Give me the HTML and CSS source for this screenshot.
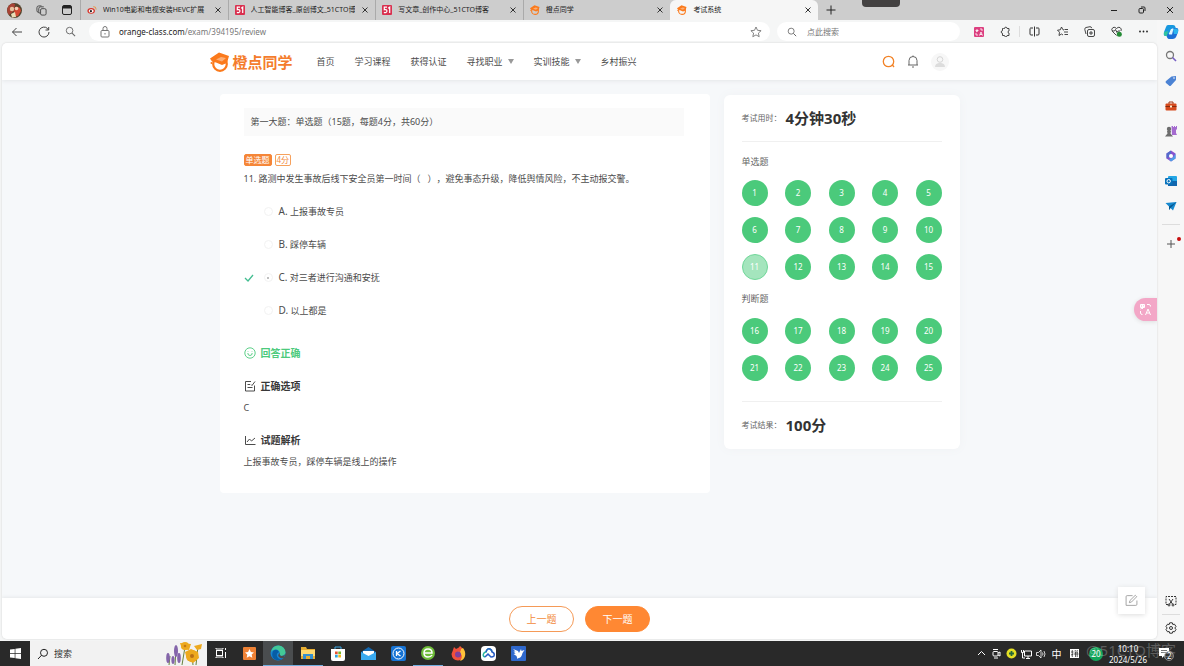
FILE: index.html
```html
<!DOCTYPE html>
<html lang="zh-CN">
<head>
<meta charset="utf-8">
<meta name="viewport" content="width=device-width, initial-scale=1">
<title>考试系统</title>
<link rel="stylesheet" href="styles.css">
</head>
<body>
<svg class="defs" aria-hidden="true">
  <symbol id="orange" viewBox="0 0 20 20">
    <circle cx="10" cy="12" r="6.800" fill="none" stroke="#fb7a1c" stroke-width="2.200"/>
    <path d="M0 6.500 9 .5l10 3.500-2 7-5 2-6-2.500-4-1z" fill="#fb7a1c"/>
    <path d="m6 7.500 5-2.500 5 1-4 3.500z" fill="#fff" opacity=".4"/>
    <circle cx="1.500" cy="11" r="1" fill="#fb7a1c"/>
  </symbol>
  <symbol id="fifty" viewBox="0 0 10 10">
    <rect width="10" height="10" rx="1" fill="#d9304f"/>
    <path d="M5 2.200H2.300V4.700C4 4.200 5 5 4.900 6.200S3.300 8 1.900 7.400M6.200 3.200 7.700 2.200V8" fill="none" stroke="#fff" stroke-width="1.200"/>
  </symbol>
  <symbol id="close" viewBox="0 0 8 8"><path d="m1.500 1.500 5 5m0-5-5 5" fill="none" stroke="#333" stroke-width="1"/></symbol>
  <symbol id="lens" viewBox="0 0 12 12"><circle cx="5" cy="5" r="3.600" fill="none" stroke="currentColor"/><path d="m7.700 7.700 3.300 3.300" stroke="currentColor" stroke-width="1.200"/></symbol>
  <symbol id="edit" viewBox="0 0 12 12"><path d="M7 1.500H2a1 1 0 0 0-1 1v8h9a1 1 0 0 0 1-1V6M4 8l.6-2L9.500 1.200l1.300 1.300L6 7.400z" fill="none" stroke="currentColor" stroke-width=".8"/></symbol>
</svg>

<header class="tabbar">
  <button class="tool avatar" aria-label="用户"><svg width="15" height="15" viewBox="0 0 15 15"><circle cx="7.500" cy="7.500" r="7.500" fill="#54452d"/><path d="M1 4q3-5 7-3L7 8 2 12Q-1 8 1 4" fill="#a94335"/><circle cx="5" cy="6" r="2.200" fill="#e6c29e"/><path d="M8 4q5-1 6 4l-3 5-5 1z" fill="#d44a34"/><circle cx="9.500" cy="5.500" r="1.800" fill="#f4cfb3"/><path d="m4 11 4-2 1 5-4 .5z" fill="#e9dfb8"/></svg></button>
  <button class="tool" aria-label="工作区"><svg width="11" height="11" viewBox="0 0 12 12" fill="none" stroke="#444"><rect x="5" y="4" width="6" height="7" rx="1.500"/><path d="M5 9H4.500a1.500 1.500 0 0 1-1.500-1.500V4a2 2 0 0 1 2-2h3.500M3 8.500Q1 8 1 6V3a2 2 0 0 1 2-2h3"/></svg></button>
  <button class="tool" aria-label="标签操作"><svg width="10" height="10" viewBox="0 0 10 10"><rect x=".5" y=".5" width="9" height="9" rx="1.500" fill="none" stroke="#222"/><path d="M1 1h8v2.500H1z" fill="#222"/></svg></button>
  <nav class="tabs" aria-label="标签页">
    <div class="tab"><svg width="10" height="10" viewBox="0 0 12 10"><ellipse cx="5" cy="6" rx="4.500" ry="3.500" fill="#d8342a"/><ellipse cx="5" cy="6.300" rx="3" ry="2.200" fill="#fff"/><circle cx="4.700" cy="6.400" r="1.300" fill="#222"/><path d="M7.500 1q3.500-.5 3.500 3.500" fill="none" stroke="#ed8a2d"/></svg><a href="#t1">Win10电影和电视安装HEVC扩展</a><button aria-label="关闭"><svg width="8" height="8"><use href="#close"/></svg></button></div>
    <div class="tab"><svg width="10" height="10"><use href="#fifty"/></svg><a href="#t2">人工智能博客_原创博文_51CTO博客</a><button aria-label="关闭"><svg width="8" height="8"><use href="#close"/></svg></button></div>
    <div class="tab"><svg width="10" height="10"><use href="#fifty"/></svg><a href="#t3">写文章_创作中心_51CTO博客</a><button aria-label="关闭"><svg width="8" height="8"><use href="#close"/></svg></button></div>
    <div class="tab"><svg width="10" height="10"><use href="#orange"/></svg><a href="#t4">橙点同学</a><button aria-label="关闭"><svg width="8" height="8"><use href="#close"/></svg></button></div>
    <div class="tab active"><svg width="10" height="10"><use href="#orange"/></svg><a href="#t5">考试系统</a><button aria-label="关闭"><svg width="8" height="8"><use href="#close"/></svg></button></div>
  </nav>
  <button class="tool" aria-label="新建标签"><svg width="10" height="10" viewBox="0 0 10 10"><path d="M5 .5v9M.5 5h9" stroke="#222"/></svg></button>
  <span class="notch"></span>
  <div class="window-controls">
    <button aria-label="最小化"><svg width="8" height="8" viewBox="0 0 8 8"><path d="M1 4.500h6" stroke="#222"/></svg></button>
    <button aria-label="还原"><svg width="8" height="8" viewBox="0 0 8 8" fill="none" stroke="#222"><rect x="1" y="2.500" width="4.500" height="4.500" rx="1"/><path d="M3 1h3a1 1 0 0 1 1 1v3"/></svg></button>
    <button aria-label="关闭窗口"><svg width="8" height="8" viewBox="0 0 8 8"><path d="m1 1 6 6m0-6-6 6" stroke="#222"/></svg></button>
  </div>
</header>

<div class="browser">
  <div class="browser-main">
    <div class="toolbar">
      <button class="tool" aria-label="后退"><svg width="12" height="12" viewBox="0 0 12 12" fill="none" stroke="#444"><path d="M11 6H1.500M5.500 2l-4 4 4 4"/></svg></button>
      <button class="tool" aria-label="刷新"><svg width="12" height="12" viewBox="0 0 12 12" fill="none" stroke="#444"><path d="M11 6a5 5 0 1 1-1.500-3.500L10.500 4M10.700 1v3H7.500"/></svg></button>
      <button class="tool" aria-label="搜索"><svg class="gray" width="11" height="11"><use href="#lens"/></svg></button>
      <div class="address">
        <svg width="10" height="12" viewBox="0 0 10 12" fill="none" stroke="#777"><rect x="1" y="4.500" width="8" height="6.500" rx="1"/><path d="M3 4.500V2.500a2 2 0 0 1 4 0v2M5 7v1.500"/></svg>
        <div class="url" role="textbox" aria-label="地址"><span>orange-class.com</span>/exam/394195/review</div>
        <button aria-label="收藏"><svg width="12" height="12" viewBox="0 0 12 12"><path d="m6 1 1.500 3.300 3.600.4-2.700 2.400.8 3.600L6 8.900l-3.200 1.800.8-3.600L.9 4.700l3.600-.4z" fill="none" stroke="#666" stroke-width=".8"/></svg></button>
      </div>
      <label class="side-search"><svg class="gray" width="10" height="10"><use href="#lens"/></svg><input type="text" placeholder="点此搜索" aria-label="点此搜索"></label>
      <div class="extensions">
        <button class="tool" aria-label="翻译"><svg width="10" height="10" viewBox="0 0 10 10"><rect width="10" height="10" rx="1" fill="#dc4080"/><path d="M1.500 3.500h3M3 2v3M2 5l2-1.500M6 2h2v2M2 6v2h2M5.500 8.500 7 5l1.500 3.500M6 7.500h2" stroke="#fff" fill="none" stroke-width=".8"/></svg></button>
        <button class="tool" aria-label="扩展"><svg width="11" height="11" viewBox="0 0 11 11"><path d="M3.500 2.500h1a1.300 1.300 0 0 1 2.600 0H9V5a1 1 0 1 0 0 2v2.500H7.100a1.300 1.300 0 0 1-2.600 0h-2V7.300a1.300 1.300 0 0 1 0-2.600V2.500z" fill="none" stroke="#333" stroke-width=".9"/></svg></button>
        <button class="tool divided" aria-label="分屏"><svg width="11" height="11" viewBox="0 0 11 11" fill="none" stroke="#333"><path d="M4 2H1.500A1 1 0 0 0 1 3v5q0 1 1 1h2M7 2h2.500q.5 0 .5 1v5q0 1-1 1H7M5.500.5v10"/></svg></button>
        <button class="tool" aria-label="收藏夹"><svg width="11" height="11" viewBox="0 0 11 11" fill="none" stroke="#333" stroke-width=".9"><path d="M7 4 6 3.800 4.500 1 3.300 3.800.5 4.200l2 2L2 9.500l2.500-1.500L6 9M7.500 3.500H11M7 6h4M7.500 8.500H11"/></svg></button>
        <button class="tool" aria-label="集锦"><svg width="11" height="11" viewBox="0 0 11 11" fill="none" stroke="#333" stroke-width=".9"><rect x="3.500" y="3.500" width="7" height="7" rx="1.500"/><path d="M2 8 .8 3.500Q.5 2 2 1.500L6 .7q1.500 0 1.700 1.500M7 5v4M5 7h4"/></svg></button>
        <button class="tool" aria-label="浏览器健康"><svg width="11" height="11" viewBox="0 0 11 11"><path d="M5.500 9.500 1.500 5.500Q-.3 3 2 1.500 4 .7 5.500 2.500 7 .7 9 1.500q2 1.300 1 3.500M1 5h2.500l1-1.500 1.500 3 1-1.500h2" fill="none" stroke="#333" stroke-width=".9"/><circle cx="8.300" cy="8.300" r="2.500" fill="#238b35"/></svg></button>
        <button class="tool" aria-label="更多"><svg width="11" height="11" viewBox="0 0 11 11" fill="#222"><circle cx="2" cy="5.500" r=".9"/><circle cx="5.500" cy="5.500" r=".9"/><circle cx="9" cy="5.500" r=".9"/></svg></button>
      </div>
    </div>

    <div class="page">
      <header class="site-header">
        <div class="site-inner">
          <a class="logo" href="#home"><svg width="20" height="20"><use href="#orange"/></svg>橙点同学</a>
          <nav class="site-nav" aria-label="主导航">
            <a href="#home">首页</a><a href="#learn">学习课程</a><a href="#cert">获得认证</a><a class="more" href="#job">寻找职业</a><a class="more" href="#skill">实训技能</a><a href="#rural">乡村振兴</a>
          </nav>
          <div class="site-actions">
            <button aria-label="搜索"><svg width="13" height="13" viewBox="0 0 13 13"><circle cx="6.500" cy="6.500" r="5.200" fill="none" stroke="#f28328" stroke-width="1.300"/><path d="m10 9.500 2 2.500" stroke="#f28328" stroke-width="1.300"/></svg></button>
            <button aria-label="通知"><svg width="12" height="13" viewBox="0 0 12 13" fill="none" stroke="#666"><path d="M1 10h10M2 10V5.500a4 4 0 0 1 8 0V10M5 12h2M6 .5v1"/></svg></button>
            <button aria-label="个人中心"><svg width="18" height="18" viewBox="0 0 18 18"><circle cx="9" cy="9" r="9" fill="#f7f7f7"/><circle cx="9" cy="6.500" r="2.800" fill="none" stroke="#d6d6d6"/><path d="M4 14q0-3.500 4-4h2q4 .5 4 4z" fill="#dcdcdc"/></svg></button>
          </div>
        </div>
      </header>

      <main class="exam">
        <section class="question-card">
          <h1 class="section-title">第一大题：单选题（15题，每题4分，共60分）</h1>
          <div class="tags"><span class="tag solid">单选题</span><span class="tag">4分</span></div>
          <p class="question">11. 路测中发生事故后线下安全员第一时间（&nbsp; &nbsp;），避免事态升级，降低舆情风险，不主动报交警。</p>
          <div class="options">
            <label><span class="mark"></span><input type="radio" name="answer" disabled><span><b>A.</b> 上报事故专员</span></label>
            <label><span class="mark"></span><input type="radio" name="answer" disabled><span><b>B.</b> 踩停车辆</span></label>
            <label><span class="mark"><svg width="10" height="8" viewBox="0 0 10 8"><path d="m1 4 3 3 5-6" fill="none" stroke="#43bd91" stroke-width="1.300"/></svg></span><input type="radio" name="answer" checked disabled><span><b>C.</b> 对三者进行沟通和安抚</span></label>
            <label><span class="mark"></span><input type="radio" name="answer" disabled><span><b>D.</b> 以上都是</span></label>
          </div>
          <h2 class="result"><svg width="12" height="12" viewBox="0 0 12 12" fill="none" stroke="currentColor" stroke-width=".9"><circle cx="6" cy="6" r="5.200"/><path d="M3.800 6q0 2.500 2.200 2.500T8.200 6M4 4v.5M8 4v.5"/></svg>回答正确</h2>
          <h2><svg width="12" height="12" viewBox="0 0 12 12" fill="none" stroke="currentColor" stroke-width=".9"><path d="M7 1.500H1.500v9.500h9V5.500M3.500 4.500h2.500M3.500 7.500h5M7 4.500l1 1 3-4"/></svg>正确选项</h2>
          <p class="answer">C</p>
          <h2><svg width="12" height="12" viewBox="0 0 12 12" fill="none" stroke="currentColor" stroke-width=".9"><path d="M1.500 2v8.500h10M3 8l2.500-3 2 2L11 4"/></svg>试题解析</h2>
          <p class="answer">上报事故专员，踩停车辆是线上的操作</p>
        </section>

        <aside class="summary-card">
          <div class="stat"><span>考试用时：</span><strong>4分钟30秒</strong></div>
          <div class="sheet">
            <h3>单选题</h3>
            <div class="numbers">
              <button>1</button><button>2</button><button>3</button><button>4</button><button>5</button>
              <button>6</button><button>7</button><button>8</button><button>9</button><button>10</button>
              <button class="current">11</button><button>12</button><button>13</button><button>14</button><button>15</button>
            </div>
            <h3>判断题</h3>
            <div class="numbers">
              <button>16</button><button>17</button><button>18</button><button>19</button><button>20</button>
              <button>21</button><button>22</button><button>23</button><button>24</button><button>25</button>
            </div>
          </div>
          <div class="stat"><span>考试结果：</span><strong>100分</strong></div>
        </aside>
      </main>

      <footer class="pager"><button>上一题</button><button class="primary">下一题</button></footer>
      <button class="translate" aria-label="翻译页面"><svg width="13" height="13" viewBox="0 0 13 13" fill="none" stroke="#fff"><path d="M1 3h5M3.500 1v5M1.500 6 5.500 3M1.500 1.500h4v3h-4zM1.500 8v2q0 1.500 2 1.500M8 1.500h2q1.500 0 1.500 2M6.500 12 9 6l2.500 6M7.500 10h3"/></svg></button>
      <button class="feedback" aria-label="反馈"><svg width="13" height="13"><use href="#edit"/></svg></button>
    </div>
  </div>

  <aside class="rail" aria-label="侧边栏">
    <button class="copilot" aria-label="Copilot"><svg width="16" height="16" viewBox="0 0 16 16"><path d="M5 1h5q2 0 2.500 2L13 5H8L5 12H2.500Q0 12 1 8L3 3q.5-2 2-2" fill="#1898df"/><path d="M3 10h4l3-6h3.500q2.500 0 1.500 4l-1.500 4q-1 3-4 3H6q-2 0-3-5" fill="#1d6fd6"/><path d="M1 8 5 7l-1 5H2Q.5 11 1 8" fill="#30c3a0"/><path d="m10 5 3-.5Q16 5 15 8l-1 2h-3z" fill="#2bb4ee"/><path d="m6.500 9.500 2.500-5h1.500L9 10.500H6z" fill="#dff5ff"/></svg></button>
    <button aria-label="搜索"><svg width="12" height="12" viewBox="0 0 12 12"><circle cx="5" cy="5" r="3.500" fill="none" stroke="#777" stroke-width="1.300"/><path d="m7.500 7.500 3.500 3.500" stroke="#775fc4" stroke-width="1.600"/></svg></button>
    <button aria-label="购物"><svg width="12" height="12" viewBox="0 0 12 12"><path d="M1 6 6.500 1.500 11 1v4L6 10.500Q5 11.500 4 10.500L1 8Q0 7 1 6" fill="#4c83d4"/><circle cx="9" cy="3" r=".8" fill="#fff"/></svg></button>
    <button aria-label="工具"><svg width="12" height="12" viewBox="0 0 12 12"><path d="M4 4V2h4v2" fill="none" stroke="#9e3717"/><rect x=".5" y="3.500" width="11" height="7" rx="1" fill="#d64a1d"/><path d="M.5 6.500h11" stroke="#832c10"/><path d="M5 5.500h2v2H5z" fill="#fff0d0"/></svg></button>
    <button aria-label="游戏"><svg width="12" height="12" viewBox="0 0 12 12"><path d="M6.500 1H8v1h1V1h1v1h1V1h1v3l-1 1v3l1 2H7z" fill="#a56bd0"/><circle cx="4" cy="4" r="2.200" fill="#6d6d6d"/><path d="M2 6h4l-.5 2.500L8 11.500H0l2.500-3z" fill="#6d6d6d"/></svg></button>
    <button aria-label="Microsoft 365"><svg width="12" height="12" viewBox="0 0 12 12"><path d="m6 .5 4.500 3v5L6 11.500l-4.500-3v-5z" fill="#8752ce"/><path d="m6 .5-4.500 3v5L5 6.500 6 3.500z" fill="#546ccb"/><path d="M10.500 3.500v5L6 11.500l-2-2 4-2z" fill="#4f9ee6"/><circle cx="6" cy="6" r="2" fill="#fff"/></svg></button>
    <button aria-label="Outlook"><svg width="12" height="12" viewBox="0 0 12 12"><rect x="3" y="1" width="9" height="10" rx="1" fill="#23a6e5"/><path d="M3 6h9v5H3z" fill="#1266ae"/><rect x="0" y="3" width="7.500" height="6.500" rx="1" fill="#0873bd"/><circle cx="3.700" cy="6.200" r="1.700" fill="none" stroke="#fff"/></svg></button>
    <button aria-label="发送"><svg width="12" height="12" viewBox="0 0 12 12"><path d="M.5 3 11.500 2 8 10.500 5.500 8 4 10V6.500z" fill="#1789cf"/><path d="m4 6.500 7.500-4.500L5.500 8 4 10z" fill="#075990"/></svg></button>
    <button class="add" aria-label="添加"><svg width="10" height="10" viewBox="0 0 10 10"><path d="M5 1v8M1 5h8" stroke="#555"/></svg><i></i></button>
    <button class="capture" aria-label="截图"><svg width="12" height="12" viewBox="0 0 12 12" fill="none" stroke="#333"><path d="M3 9.500H1v-8h10v8H9" stroke-dasharray="2 1"/><path d="m4 4 3.500 5M8 4 4.500 9"/><circle cx="4" cy="10" r="1"/><circle cx="8" cy="10" r="1"/></svg></button>
    <button class="settings" aria-label="设置"><svg width="12" height="12" viewBox="0 0 12 12" fill="none" stroke="#333"><path d="m4.700.8-.5 1.700-1.700-.3L1 4.500 2.200 6 1 7.500l1.500 2.300 1.700-.3.500 1.700h2.600l.5-1.700 1.700.3L11 7.500 9.800 6 11 4.500 9.500 2.200l-1.700.3L7.300.8z"/><circle cx="6" cy="6" r="1.500"/></svg></button>
  </aside>
</div>

<footer class="taskbar">
  <button class="start" aria-label="开始"><svg width="11" height="11" viewBox="0 0 11 11" fill="#fff"><path d="m0 1.500 4.700-.6V5H0zM5.400.8 11 0v5H5.400zM0 5.700h4.700V10L0 9.400zM5.400 5.700H11V11l-5.600-.8z"/></svg></button>
  <label class="task-search"><svg width="12" height="12" viewBox="0 0 12 12" fill="none" stroke="#222"><circle cx="7" cy="4.800" r="3.500"/><path d="M4.500 7.300 1 11"/></svg><input type="text" placeholder="搜索" aria-label="搜索">
    <svg width="38" height="23" viewBox="0 0 38 23"><g stroke="#65803e" fill="none"><path d="m4 23 1-9M10 23l1-17M17 23l3-18M28 23l-1-10M33 4l-2 19"/></g><g fill="#8465aa"><ellipse cx="3" cy="16" rx="1.800" ry="5"/><ellipse cx="8" cy="18" rx="1.600" ry="4"/><ellipse cx="11" cy="9" rx="2" ry="6"/><ellipse cx="14" cy="16" rx="1.800" ry="5"/></g><g fill="#eda91e"><circle cx="20" cy="4" r="4"/><path d="m15 1 11 1-2 6-7-1z"/><circle cx="27" cy="14" r="6"/><path d="m20 10 6-3 7 3 1 6-6 5-6-3z"/><path d="m29 4 8-2-1 5-4 1z"/></g><circle cx="27" cy="14" r="2" fill="#b96f16"/><circle cx="20" cy="4" r="1.300" fill="#c47713"/></svg>
  </label>
  <nav class="apps" aria-label="任务栏应用">
    <button class="narrow" aria-label="任务视图"><svg width="12" height="12" viewBox="0 0 12 12" fill="none" stroke="#fff"><rect x="1.500" y="3.500" width="6" height="5"/><path d="M1 1v1h7V1M1 11v-1h7v1M10.500 1v2M10.500 5v6"/></svg></button>
    <button class="narrow" aria-label="收藏"><svg width="13" height="13" viewBox="0 0 13 13"><rect width="13" height="13" rx="1" fill="#ee8135"/><path d="m6.500 2 1.400 3 3.100.4-2.300 2.200.6 3.200-2.800-1.600-2.800 1.600.6-3.200L2 5.400 5.100 5z" fill="#fff"/></svg></button>
    <button class="selected" aria-label="Edge"><svg width="16" height="16" viewBox="0 0 16 16"><circle cx="8" cy="8" r="7.500" fill="#1784d1"/><path d="M1 7Q3 0 9 .6q6 .8 6.500 7Q15 11 11 11q-2-1-1-3Q9 4 5 4.500 2 5 1 7" fill="#43c997"/><path d="M3 6q4-3 6 1-4 2-1 6 2 2 5 0-4 4-9 1-3-3-1-8" fill="#075da5"/><path d="M10 8q-1 2 1 3 4 0 4.500-3L14 13q-3 1-5-1-2-2 1-4" fill="#4a4d4f"/></svg></button>
    <button class="open" aria-label="文件资源管理器"><svg width="14" height="12" viewBox="0 0 14 12"><path d="M0 0h5l1 2h8v10H0z" fill="#e7ad32"/><path d="M0 3h14v6H0z" fill="#ffda71"/><path d="M2 12V7h10v5H9V9H5v3z" fill="#3590cf"/></svg></button>
    <button aria-label="应用商店"><svg width="14" height="15" viewBox="0 0 14 15"><path d="M4 4V1h6v3" fill="none" stroke="#3ca9e6"/><path d="M0 3h14v10q0 2-2 2H2q-2 0-2-2z" fill="#fff"/><path d="M4 5.500h2.700v2.700H4z" fill="#e85332"/><path d="M7.300 5.500H10v2.700H7.300z" fill="#77b72b"/><path d="M4 8.800h2.700v2.700H4z" fill="#2ba5e0"/><path d="M7.300 8.800H10v2.700H7.300z" fill="#f4b71d"/></svg></button>
    <button aria-label="邮件"><svg width="15" height="13" viewBox="0 0 15 13"><path d="m0 5 7.500-5L15 5v8H0z" fill="#1468af"/><path d="M2 4h11v3l-5.500 3L2 7z" fill="#fff"/><path d="m0 5 7.500 4L15 5v8H0z" fill="#38aaf0"/></svg></button>
    <button aria-label="酷狗"><svg width="15" height="15" viewBox="0 0 15 15"><rect width="15" height="15" rx="2" fill="#1673d4"/><circle cx="7.500" cy="7.500" r="5.500" fill="none" stroke="#fff"/><path d="M5.500 5v5M9.500 5 6 7.500l3.500 2.500" fill="none" stroke="#fff" stroke-width="1.300"/></svg></button>
    <button class="open" aria-label="360浏览器"><svg width="14" height="14" viewBox="0 0 14 14"><circle cx="7" cy="7" r="7" fill="#6fbd39"/><path d="M3 7h8Q11 3 7 3T3 7q0 4 4 4 3 0 4-2" fill="none" stroke="#fff" stroke-width="1.500"/></svg></button>
    <button aria-label="Firefox"><svg width="15" height="15" viewBox="0 0 15 15"><path d="m2 4 1-3 2 2q3-1 4-3 5 4 5 8-1 6-7 6.500Q1 14 .5 8z" fill="#f0503c"/><path d="m9 0 1 3 2-1q3 4 2 8-1 4-5 5 3-4 1-7-2-3-5-1 2-2 4-1 2-3 0-6" fill="#ffc23a"/><circle cx="7" cy="8.500" r="3" fill="#80419d"/></svg></button>
    <button aria-label="网盘"><svg width="15" height="15" viewBox="0 0 15 15"><rect width="15" height="15" rx="4" fill="#fff"/><path d="M4 11q-3-1-1-4 1-1 2-1 1-4 4-3 2 1 2 3" fill="none" stroke="#2bb6a0" stroke-width="1.500"/><path d="M5 6q1-4 4-3 2 1 2 3 3 1 2 4-1 1-3 1L7 8l-3 3" fill="none" stroke="#295dc4" stroke-width="1.500"/></svg></button>
    <button aria-label="迅雷"><svg width="15" height="15" viewBox="0 0 15 15"><rect width="15" height="15" rx="1" fill="#2f68cc"/><path d="m2 3 5 2 1 2 2-4 .5 2 3-1-2 3q-1 5-4 5l-1 1-1-3-3-2 2-.5-2-2h2z" fill="#fff"/></svg></button>
  </nav>
  <div class="tray">
    <button aria-label="显示隐藏的图标"><svg width="9" height="9" viewBox="0 0 9 9"><path d="m1 6 3.500-3.500L8 6" fill="none" stroke="#fff"/></svg></button>
    <button aria-label="会议"><svg width="9" height="11" viewBox="0 0 9 11" fill="none" stroke="#fff"><rect x="1" y="3.500" width="5" height="4.500" rx="1"/><path d="m6 5 2-1v4L6 7M1 1.500h5M2 10h4"/></svg></button>
    <button aria-label="安全"><svg width="11" height="11" viewBox="0 0 11 11"><circle cx="5.500" cy="5.500" r="5" fill="#e4df25"/><path d="M5.500 3v5M3 5.500h5" stroke="#23663a" stroke-width="1.800"/></svg></button>
    <button aria-label="网络"><svg width="11" height="10" viewBox="0 0 11 10" fill="none" stroke="#fff"><path d="M3.500 2h7v5h-7zM5 9.500h4M7 7v2M.5 1v2.500h2V1M1.500 4v5H4"/></svg></button>
    <button aria-label="音量"><svg width="11" height="10" viewBox="0 0 11 10" fill="none" stroke="#fff" stroke-width=".8"><path d="M.5 3.500h2L5 1v8L2.500 6.500h-2zM6.500 3.500q1 1.500 0 3M8 2q2 3 0 6"/></svg></button>
    <button class="ime">中</button>
    <button class="ime grid" aria-label="拼音"><svg width="9" height="9" viewBox="0 0 9 9"><rect width="9" height="9" fill="#fff"/><path d="M1 3h2.500M2.300 1v7M1 6l2.500-1M4.500 3H8M4 5h4.500M5.500 3v5M7.200 3v5M5 1l.5 1M7.500 1 7 2" stroke="#222" stroke-width=".7"/></svg></button>
    <button class="battery">20</button>
    <time>10:10<br>2024/5/26</time>
    <button class="notice" aria-label="2 条通知"><svg width="16" height="14" viewBox="0 0 16 14"><path d="M1 1h10v8H6l-2 2V9H1z" fill="#fff"/><path d="M3 3.500h6M3 5.500h6" stroke="#333" stroke-width=".7"/><circle cx="11" cy="9" r="4.500" fill="#333" stroke="#aaa" stroke-width=".7"/></svg><i>2</i></button>
  </div>
  <span class="watermark">@51CTO博客</span>
</footer>
</body>
</html>
```

FILE: styles.css
```css
* { box-sizing: border-box; }

body {
  margin: 0;
  min-height: 100vh;
  display: flex;
  flex-direction: column;
  background: #f5f6f6;
  color: #4c4c4c;
  font: 9px/14px "Noto Sans", "Noto Sans CJK SC", sans-serif;
}

h1, h2, h3, p { margin: 0; }
a { color: inherit; text-decoration: none; }
i { font-style: normal; }
svg { display: block; flex: none; }
.defs { position: absolute; width: 0; height: 0; }

button {
  display: flex;
  align-items: center;
  justify-content: center;
  flex: none;
  margin: 0;
  padding: 0;
  border: 0;
  background: none;
  color: inherit;
  font: inherit;
}

input[type="text"] {
  flex: 1;
  min-width: 0;
  padding: 0;
  border: 0;
  outline: 0;
  background: none;
  font: inherit;
}

/* Browser tabs */
.tabbar {
  position: relative;
  display: flex;
  height: 20px;
  background: #cdcdcd;
}
.tool { width: 27px; }
.tabbar .tool { width: 26px; }
.tabbar .avatar { width: 28px; }
.gray { color: #666; }
.tabs { display: flex; flex: 0 1 738px; min-width: 0; }
.tab {
  display: flex;
  align-items: center;
  gap: 6px;
  flex: 1 1 0;
  min-width: 0;
  padding: 0 6px;
  border-left: 1px solid #aaa;
  background: #cdcdcd;
  color: #222;
  font-size: 7px;
}
.tab a { flex: 1; min-width: 0; overflow: hidden; white-space: nowrap; }
.tab.active { border-color: #f6f6f6; border-radius: 6px 6px 0 0; background: #f6f6f6; }
.notch {
  position: absolute;
  top: 0;
  right: 284px;
  width: 38px;
  height: 7px;
  border-radius: 0 0 4px 4px;
  background: #434141;
}
.window-controls { display: flex; margin-left: auto; }
.window-controls button { width: 28px; }

/* Browser chrome */
.browser { flex: 1; display: flex; }
.browser-main { flex: 1; min-width: 0; display: flex; flex-direction: column; padding: 0 0 2px 2px; }
.toolbar { display: flex; align-items: center; height: 23px; padding-left: 1px; }
.address, .side-search {
  display: flex;
  align-items: center;
  height: 19px;
  border-radius: 10px;
  background: #fff;
  font-size: 8px;
}
.address { flex: 1; gap: 9px; margin: 0 7px 0 5px; padding: 0 8px 0 11px; }
.url { flex: 1; color: #777; white-space: nowrap; }
.url span { color: #222; }
.side-search { width: 183px; gap: 10px; padding-left: 10px; }
.side-search input::placeholder { color: #777; opacity: 1; }
.extensions { display: flex; margin-left: 5px; }
.divided { border-left: 1px solid #ddd; width: 30px; }

/* Site */
.page {
  position: relative;
  flex: 1;
  display: flex;
  flex-direction: column;
  overflow: hidden;
  border-radius: 5px;
  background: #f6f8fa;
  box-shadow: 0 0 2px #ccc;
}
.site-header { background: #fff; box-shadow: 0 1px 4px #e4e6e8; }
.site-inner {
  display: flex;
  align-items: center;
  width: 100%;
  max-width: 740px;
  height: 37px;
  margin: 0 auto;
}
.logo {
  display: flex;
  align-items: center;
  gap: 3px;
  color: #f47c2c;
  font-size: 15px;
  font-weight: 700;
}
.site-nav { display: flex; gap: 20px; margin-left: 24px; white-space: nowrap; }
.more::after {
  content: "";
  display: inline-block;
  margin: 0 0 1px 5px;
  border: 3px solid transparent;
  border-top: 5px solid #999;
  border-bottom: 0;
}
.site-actions { display: flex; align-items: center; gap: 12px; margin-left: auto; padding-right: 1px; }

.exam {
  flex: 1;
  display: flex;
  align-items: flex-start;
  gap: 14px;
  width: 100%;
  max-width: 760px;
  margin: 0 auto;
  padding: 14px 0 14px 20px;
}
.question-card {
  flex: 1;
  min-width: 0;
  padding: 14px 26px 24px 24px;
  border-radius: 4px;
  background: #fff;
}
.section-title {
  padding: 7px;
  background: #fafafa;
  font-size: 9px;
  font-weight: 400;
}
.tags { display: flex; gap: 3px; margin-top: 18px; }
.tag {
  padding: 0 1px;
  border: 1px solid #f6a15d;
  border-radius: 2px;
  color: #f28a3c;
  font-size: 8px;
  line-height: 10px;
}
.tag.solid { border-color: #f58638; background: #f58638; color: #fff; }
.question { margin-top: 6px; text-spacing-trim: space-all; }
.options { margin-top: 9px; }
.options label { display: flex; align-items: center; height: 33px; }
.options label > span:last-child { padding-left: 1px; }
.options b { font-size: 10px; font-weight: 400; }
.mark { width: 20px; }
.options input {
  appearance: none;
  display: grid;
  place-items: center;
  width: 9px;
  height: 9px;
  margin: 0 5px 0 0;
  border: 1px solid #f2f2f2;
  border-radius: 50%;
}
.options input:checked::before { content: ""; width: 2px; height: 2px; border-radius: 50%; background: #aaa; }
.question-card h2 {
  display: flex;
  align-items: center;
  gap: 5px;
  margin-top: 18px;
  color: #383838;
  font-size: 10px;
  line-height: 14px;
}
.question-card h2.result { margin: 19px 0; color: #4cca7c; }
.answer { margin-top: 8px; }

.summary-card {
  width: 236px;
  margin-top: 1px;
  padding: 9px 18px 10px;
  border-radius: 6px;
  background: #fff;
  box-shadow: 0 0 10px #f0f2f4;
}
.stat { display: flex; align-items: center; gap: 4px; height: 28px; }
.stat span { color: #666; font-size: 8px; }
.stat strong { color: #333; font-size: 15px; line-height: 20px; }
.sheet {
  margin: 9px 0;
  padding: 13px 0 20px;
  border-top: 1px solid #f0f0f0;
  border-bottom: 1px solid #f0f0f0;
}
.sheet h3 { color: #666; font-size: 9px; font-weight: 400; line-height: 14px; }
.numbers {
  display: grid;
  grid-template-columns: repeat(5, 26px);
  justify-content: space-between;
  gap: 11px 0;
  margin: 11px 0 12px;
}
.numbers:last-child { margin: 12px 0 0; }
.numbers button {
  height: 26px;
  border-radius: 50%;
  background: #4bca7b;
  color: #fff;
  font-size: 8px;
}
.numbers .current { border: 1px solid #70d799; background: #a4e5bd; }

.pager {
  display: flex;
  align-items: center;
  justify-content: center;
  gap: 11px;
  height: 41px;
  background: #fff;
  box-shadow: 0 -1px 3px #e6e8ea;
}
.pager button {
  width: 65px;
  height: 26px;
  border: 1px solid #f59a57;
  border-radius: 13px;
  color: #f28a3c;
  font-size: 10px;
}
.pager .primary { border-color: #ff8833; background: #ff8833; color: #fff; }

.translate {
  position: absolute;
  top: 255px;
  right: 0;
  width: 23px;
  height: 23px;
  border-radius: 12px 0 0 12px;
  background: #f3a7c7;
  box-shadow: 0 1px 4px #ddd;
}
.feedback {
  position: absolute;
  right: 12px;
  bottom: 25px;
  width: 27px;
  height: 27px;
  background: #fff;
  box-shadow: 0 1px 5px #ddd;
  color: #999;
}

/* Browser side rail */
.rail { display: flex; flex-direction: column; align-items: center; width: 27px; background: #f7f7f7; }
.rail button { width: 27px; height: 25px; }
.rail .copilot { height: 23px; }
.rail .add { position: relative; width: 18px; height: 38px; margin-top: 6px; border-top: 1px solid #ddd; }
.add i { position: absolute; top: 12px; right: -1px; width: 4px; height: 4px; border-radius: 50%; background: #c80f0f; }
.rail .capture { height: 27px; margin-top: auto; }
.rail .settings { width: 18px; height: 27px; border-top: 1px solid #ddd; }

/* Taskbar */
.taskbar { position: relative; display: flex; height: 25px; background: #292929; color: #fff; }
.start { width: 30px; }
.task-search {
  display: flex;
  align-items: center;
  gap: 5px;
  width: 177px;
  padding: 1px 4px 1px 7px;
  background: #f2f2f2;
  font-size: 9px;
}
.task-search input::placeholder { color: #333; opacity: 1; }
.apps { display: flex; }
.apps button { width: 30px; border-bottom: 1px solid transparent; }
.apps .narrow { width: 28px; }
.apps .selected { border-color: #72aee0; background: #4a4d4f; }
.apps .open { border-color: #72aee0; }
.tray { display: flex; align-items: center; margin-left: auto; }
.tray button { width: 15px; height: 25px; }
.tray .ime { font-size: 10px; }
.tray .grid { width: 20px; }
.tray .battery { width: 14px; height: 14px; margin: 0 5px; border-radius: 50%; background: #13a55b; font-size: 8px; }
.tray time { width: 40px; font-size: 8px; line-height: 11px; text-align: center; }
.tray .notice { position: relative; width: 36px; }
.notice i { position: absolute; top: 10px; left: 19px; font-size: 8px; line-height: 10px; }
.watermark {
  position: absolute;
  right: 8px;
  bottom: 6px;
  color: #ffffff40;
  font-size: 15px;
  line-height: 20px;
  pointer-events: none;
}
```
